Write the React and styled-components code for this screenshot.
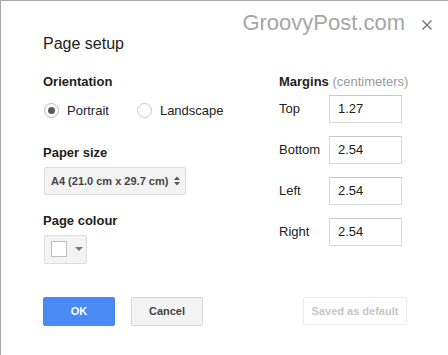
import React from 'react'
import styled, { createGlobalStyle } from 'styled-components'

const GlobalStyle = createGlobalStyle`
  html, body {
    margin: 0;
    padding: 0;
    background: #fff;
  }

  body {
    font-family: 'Liberation Sans', Arial, sans-serif;
    color: #222;
  }
`

const Dialog = styled.div`
  box-sizing: border-box;
  width: 448px;
  height: 355px;
  padding: 11px 0 0 42px;
  border-top: 1px solid #a9a9a9;
  border-left: 1px solid #a9a9a9;
  background: #fff;
  overflow: hidden;
`

const TopRow = styled.div`
  display: flex;
  align-items: center;
  justify-content: flex-end;
  height: 22px;
  padding-right: 16px;
`

const Watermark = styled.span`
  font-size: 22px;
  line-height: 22px;
  color: #a6a6a6;
`

const CloseButton = styled.button`
  appearance: none;
  border: none;
  background: transparent;
  margin: 3px 0 0 17px;
  padding: 0;
  width: 10px;
  height: 10px;
  display: flex;
  cursor: pointer;
`

const Title = styled.h1`
  margin: 0;
  font-size: 16px;
  line-height: 20px;
  font-weight: 400;
  color: #222;
`

const Columns = styled.div`
  display: grid;
  grid-template-columns: 236px 1fr;
  margin-top: 20px;
`

const Column = styled.div`
  display: flex;
  flex-direction: column;
  align-items: flex-start;
`

const Label = styled.div`
  font-size: 13px;
  line-height: 16px;
  font-weight: 700;
  color: #222;
  margin-top: ${(p) => p.$gap || 0}px;
`

const Hint = styled.span`
  font-weight: 400;
  color: #999;
`

const RadioRow = styled.div`
  display: flex;
  align-items: center;
  gap: 28px;
  height: 20px;
  margin-top: 10.5px;
  margin-left: 1px;
`

const RadioOption = styled.label`
  display: flex;
  align-items: center;
  gap: 8px;
  font-size: 13px;
  color: #222;
`

const RadioCircle = styled.span`
  box-sizing: border-box;
  width: 15px;
  height: 15px;
  border-radius: 50%;
  border: 1px solid ${(p) => (p.$checked ? '#b8b8b8' : '#c8c8c8')};
  background: #fff;
  display: flex;
  align-items: center;
  justify-content: center;

  &::after {
    content: '';
    width: 7px;
    height: 7px;
    border-radius: 50%;
    background: ${(p) => (p.$checked ? '#5a5a5a' : 'transparent')};
  }
`

const Select = styled.div`
  box-sizing: border-box;
  display: flex;
  align-items: center;
  gap: 6px;
  height: 28px;
  margin-top: 5.5px;
  margin-left: 1px;
  padding: 0 5px 0 6px;
  border: 1px solid #dcdcdc;
  border-radius: 2px;
  background: #f3f3f3;
  font-size: 11px;
  font-weight: 700;
  color: #444;
`

const ColourButton = styled.div`
  box-sizing: border-box;
  display: flex;
  align-items: center;
  gap: 8px;
  width: 43px;
  height: 29px;
  margin-top: 5.5px;
  margin-left: 1px;
  padding-left: 6px;
  border: 1px solid #dcdcdc;
  border-radius: 2px;
  background: #f3f3f3;
`

const Swatch = styled.span`
  box-sizing: border-box;
  width: 16px;
  height: 16px;
  border: 1px solid #bdbdbd;
  background: #fff;
`

const Caret = styled.span`
  width: 0;
  height: 0;
  border-left: 4px solid transparent;
  border-right: 4px solid transparent;
  border-top: 4px solid #777;
`

const MarginRow = styled.div`
  display: flex;
  align-items: center;
  margin-top: ${(p) => p.$gap}px;
`

const MarginLabel = styled.span`
  width: 50px;
  font-size: 13px;
  color: #222;
`

const MarginInput = styled.input`
  box-sizing: border-box;
  width: 73px;
  height: 28px;
  padding: 0 0 0 8px;
  border: 1px solid #d9d9d9;
  border-top-color: #c9c9c9;
  border-radius: 0;
  font-family: inherit;
  font-size: 13px;
  color: #222;
  outline: none;
`

const Footer = styled.div`
  display: flex;
  align-items: flex-start;
  gap: 16px;
  margin-top: 33px;
  padding-right: 41px;
`

const Button = styled.button`
  box-sizing: border-box;
  height: 29px;
  min-width: 72px;
  padding: 0 8px;
  border-radius: 2px;
  font-family: inherit;
  font-size: 11px;
  font-weight: 700;
  cursor: pointer;
  border: 1px solid ${(p) => (p.$primary ? '#4787ed' : '#d6d6d6')};
  background: ${(p) => (p.$primary ? '#4a8af4' : '#f3f3f3')};
  color: ${(p) => (p.$primary ? '#fff' : '#444')};
`

const GhostButton = styled.button`
  box-sizing: border-box;
  height: 28px;
  width: 104px;
  margin-left: auto;
  padding: 0;
  border: 1px solid #ebebeb;
  border-radius: 2px;
  background: #fff;
  font-family: inherit;
  font-size: 11px;
  font-weight: 700;
  color: #c6c6c6;
`

const margins = [
  { label: 'Top', value: '1.27' },
  { label: 'Bottom', value: '2.54' },
  { label: 'Left', value: '2.54' },
  { label: 'Right', value: '2.54' },
]

function Arrows() {
  return (
    <svg width="6" height="10" viewBox="0 0 6 10">
      <path d="M0 4 L3 0.5 L6 4 Z" fill="#555" />
      <path d="M0 6 L3 9.5 L6 6 Z" fill="#555" />
    </svg>
  )
}

export default function App() {
  return (
    <>
      <GlobalStyle />
      <Dialog>
        <TopRow>
          <Watermark>GroovyPost.com</Watermark>
          <CloseButton type="button" aria-label="Close">
            <svg width="10" height="10" viewBox="0 0 10 10">
              <path d="M0.5 0.5 L9.5 9.5 M9.5 0.5 L0.5 9.5" stroke="#6f6f6f" strokeWidth="1.3" />
            </svg>
          </CloseButton>
        </TopRow>
        <Title>Page setup</Title>
        <Columns>
          <Column>
            <Label>Orientation</Label>
            <RadioRow>
              <RadioOption>
                <RadioCircle $checked />
                Portrait
              </RadioOption>
              <RadioOption>
                <RadioCircle />
                Landscape
              </RadioOption>
            </RadioRow>
            <Label $gap={24.5}>Paper size</Label>
            <Select>
              A4 (21.0 cm x 29.7 cm)
              <Arrows />
            </Select>
            <Label $gap={18.5}>Page colour</Label>
            <ColourButton>
              <Swatch />
              <Caret />
            </ColourButton>
          </Column>
          <Column>
            <Label>
              Margins <Hint>(centimeters)</Hint>
            </Label>
            {margins.map((m, i) => (
              <MarginRow key={m.label} $gap={i === 0 ? 4.5 : 13}>
                <MarginLabel>{m.label}</MarginLabel>
                <MarginInput defaultValue={m.value} />
              </MarginRow>
            ))}
          </Column>
        </Columns>
        <Footer>
          <Button $primary type="button">OK</Button>
          <Button type="button">Cancel</Button>
          <GhostButton type="button" disabled>Saved as default</GhostButton>
        </Footer>
      </Dialog>
    </>
  )
}
